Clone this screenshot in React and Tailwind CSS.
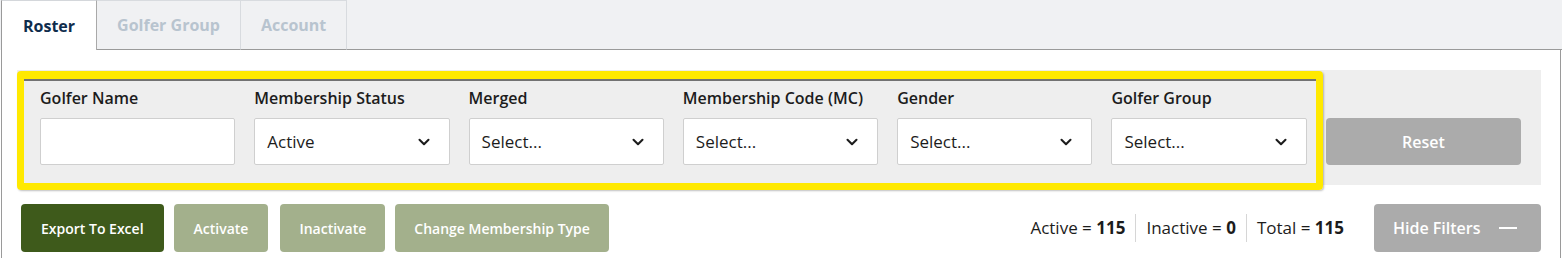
import { ChevronDown } from 'lucide-react';

const FONT = { fontFamily: '"Open Sans", "Liberation Sans", sans-serif' };

const FIELDS = [
  { label: 'Golfer Name', type: 'input' },
  { label: 'Membership Status', value: 'Active' },
  { label: 'Merged', value: 'Select...' },
  { label: 'Membership Code (MC)', value: 'Select...' },
  { label: 'Gender', value: 'Select...' },
  { label: 'Golfer Group', value: 'Select...' },
];

function Tab({ label, active }) {
  if (active) {
    return (
      <div className="ml-[1px] h-[50px] px-[21px] flex items-center bg-white border-l border-t border-r border-l-[#9a9a9a] border-t-[#d4d7db] border-r-[#a9a9a9]">
        <span className="text-[16px] font-bold text-[#0f2c4c]">{label}</span>
      </div>
    );
  }
  return (
    <div className="h-[50px] px-[20px] flex items-center bg-[#f0f1f3] border-t border-r border-b border-t-[#d8dbdf] border-r-[#d8dbdf] border-b-[#9a9a9a]">
      <span className="text-[16px] font-bold text-[#b8c4cf]">{label}</span>
    </div>
  );
}

function Field({ label, type, value }) {
  return (
    <div className="flex flex-col pt-[16px]">
      <div className="h-[24px] leading-[24px] text-[16px] font-semibold text-[#1c1c1c] whitespace-nowrap">{label}</div>
      {type === 'input' ? (
        <div className="mt-[8px] h-[47px] bg-white border border-[#cfcfcf] rounded-[2px]" />
      ) : (
        <div className="mt-[8px] h-[47px] bg-white border border-[#cfcfcf] rounded-[2px] flex items-center justify-between pl-[12px] pr-[16px]">
          <span className="text-[17px] text-[#1c1c1c]">{value}</span>
          <ChevronDown size={18} strokeWidth={2.75} className="text-[#1c1c1c]" />
        </div>
      )}
    </div>
  );
}

function Divider() {
  return <div className="w-px h-[28px] bg-[#d6d6d6] mx-[10px]" />;
}

export default function App() {
  return (
    <div className="w-[1562px] h-[258px] bg-white overflow-hidden" style={FONT}>
      {/* Tabs */}
      <div className="flex items-end bg-[#f0f1f3]">
        <Tab label="Roster" active />
        <Tab label="Golfer Group" />
        <Tab label="Account" />
        <div className="flex-1 h-[50px] border-b border-[#9a9a9a]" />
      </div>

      {/* Content */}
      <div className="ml-[1px] w-[1560px] h-[208px] border-l border-r border-[#9a9a9a] pl-[15px] pt-[20px]">
        <div className="relative w-[1524px] h-[115px] bg-[#eeeeee] pl-[23px] pr-[20px] grid grid-cols-7 gap-x-[19px]">
          {FIELDS.map((f) => (
            <Field key={f.label} {...f} />
          ))}
          <div className="flex flex-col pt-[48px]">
            <button className="h-[47px] rounded-[4px] bg-[#ababab] text-white text-[16px] font-semibold">Reset</button>
          </div>

          {/* highlight overlay */}
          <div className="absolute left-0 top-[1px] w-[1306px] h-[119px] border-[7px] border-t-[8px] border-[#ffe900] rounded-[4px] pointer-events-none shadow-[1px_1px_2px_rgba(0,0,0,0.25)]">
            <div className="h-[2px] bg-[#727272]" />
          </div>
        </div>

        <div className="mt-[19px] ml-[4px] w-[1520px] flex items-center">
          <button className="h-[48px] px-[20px] rounded-[4px] bg-[#3e5a1b] text-white text-[14px] font-semibold">Export To Excel</button>
          <button className="ml-[10px] h-[48px] px-[20px] rounded-[4px] bg-[#a3b08c] text-white text-[14px] font-semibold">Activate</button>
          <button className="ml-[12px] h-[48px] px-[19px] rounded-[4px] bg-[#a3b08c] text-white text-[14px] font-semibold">Inactivate</button>
          <button className="ml-[10px] h-[48px] px-[19px] rounded-[4px] bg-[#a3b08c] text-white text-[14px] font-semibold">Change Membership Type</button>

          <div className="flex-1" />

          <div className="flex items-center text-[17px] text-[#1c1c1c]">
            <span>Active = <b className="font-bold">115</b></span>
            <Divider />
            <span>Inactive = <b className="font-bold">0</b></span>
            <Divider />
            <span>Total = <b className="font-bold">115</b></span>
          </div>

          <button className="ml-[30px] h-[48px] w-[167px] pl-[19px] pr-[24px] rounded-[4px] bg-[#ababab] text-white text-[16px] font-semibold flex items-center justify-between">
            <span>Hide Filters</span>
            <span className="w-[18px] h-[2px] bg-white" />
          </button>
        </div>
      </div>
    </div>
  );
}
